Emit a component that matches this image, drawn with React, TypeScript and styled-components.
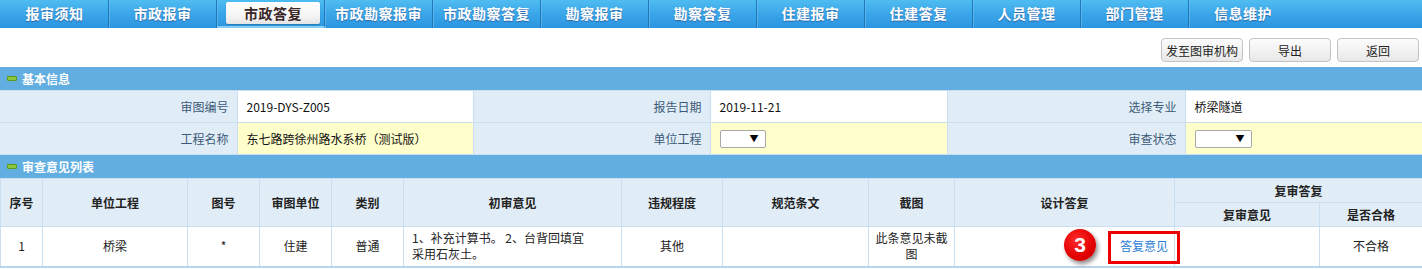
import styled, { createGlobalStyle } from 'styled-components';

const GlobalStyle = createGlobalStyle`
  html, body {
    margin: 0;
    padding: 0;
    background: #fff;
  }
  body {
    font-family: "Noto Sans CJK SC", "Microsoft YaHei", "DejaVu Sans", sans-serif;
    font-size: 12px;
    color: #333;
    width: 1422px;
  }
`;

const tabs = [
  '报审须知',
  '市政报审',
  '市政答复',
  '市政勘察报审',
  '市政勘察答复',
  '勘察报审',
  '勘察答复',
  '住建报审',
  '住建答复',
  '人员管理',
  '部门管理',
  '信息维护',
];

const NavBar = styled.div`
  display: flex;
  height: 28px;
  padding-left: 1px;
  background: linear-gradient(#4fbcf1 0%, #3aa6e8 50%, #2b95e0 100%);
  overflow: hidden;
`;

const Tab = styled.div<{ $active?: boolean }>`
  position: relative;
  flex: 0 0 108px;
  display: flex;
  align-items: flex-start;
  justify-content: center;
  padding-top: 2px;
  box-sizing: border-box;
  border-right: 1px solid #1f77b8;
  box-shadow: 1px 0 0 rgba(120, 200, 245, 0.5);
  font-size: 14px;
  font-weight: 700;
  letter-spacing: 0.5px;
  color: #fff;
  text-shadow: 0 1px 1px rgba(40, 30, 90, 0.45);

  &:last-child {
    border-right: none;
    box-shadow: none;
  }

  ${({ $active }) =>
    $active &&
    `
    border-bottom: 2px solid #86cdf4;
  `}
`;

const ActiveLabel = styled.span`
  display: flex;
  align-items: center;
  justify-content: center;
  width: 94px;
  height: 22px;
  margin-left: 5px;
  border-radius: 2px;
  background: linear-gradient(#ffffff 0%, #f6f6f6 60%, #e4e4e4 100%);
  box-shadow: 0 1px 1px rgba(0, 0, 0, 0.2);
  color: #3a2626;
  text-shadow: none;
`;

const TabText = styled.span`
  height: 22px;
  line-height: 22px;
`;

const Toolbar = styled.div`
  display: flex;
  justify-content: flex-end;
  gap: 6px;
  height: 39px;
  padding: 10px 3px 0 0;
  box-sizing: border-box;
`;

const ToolButton = styled.button`
  width: 82px;
  height: 24px;
  padding: 0;
  border: 1px solid #c4c4c4;
  border-radius: 4px;
  background: linear-gradient(#fcfcfc, #e8e8e8);
  font-family: inherit;
  font-size: 12px;
  color: #222;
  cursor: pointer;
`;

const SectionBar = styled.div`
  display: flex;
  align-items: center;
  gap: 5px;
  height: 23px;
  padding-left: 7px;
  background: #62aee0;
  color: #fff;
  font-size: 12px;
  font-weight: 700;
`;

const Minus = styled.span`
  width: 8px;
  height: 3px;
  border-radius: 1px;
  background: #8cc63f;
  border: 1px solid #5c9a1c;
`;

const InfoTable = styled.table`
  width: 1422px;
  border-collapse: collapse;
  table-layout: fixed;
`;

const InfoRow = styled.tr`
  height: 32px;
`;

const LabelCell = styled.td`
  padding: 0 8px 0 0;
  border: 1px solid #c9def0;
  border-left: none;
  background: #e1edf6;
  text-align: right;
  color: #3b5a78;
`;

const ValueCell = styled.td<{ $tone?: 'white' | 'yellow' }>`
  padding: 0 0 0 9px;
  border: 1px solid #c9def0;
  background: ${({ $tone }) => ($tone === 'yellow' ? '#ffffcc' : '#fff')};
  color: #111;
`;

const Select = styled.div<{ $w: number }>`
  display: flex;
  justify-content: flex-end;
  align-items: center;
  width: ${({ $w }) => $w}px;
  height: 18px;
  padding-right: 6px;
  box-sizing: border-box;
  border: 1px solid #a8a8a8;
  border-radius: 2px;
  background: #fff;
  font-size: 9px;
  color: #000;
`;

const GridTable = styled.table`
  width: 1422px;
  border-collapse: collapse;
  table-layout: fixed;
  border-bottom: 2px solid #b9d3ea;
`;

const HeadCell = styled.th`
  height: 23px;
  padding: 0;
  border: 1px solid #c9def0;
  background: #e1edf6;
  font-weight: 700;
  font-size: 12px;
  color: #222;
  text-align: center;
`;

const DataRow = styled.tr`
  height: 40px;
`;

const DataCell = styled.td<{ $align?: 'left' | 'center' | 'right' }>`
  position: relative;
  padding: 0 4px;
  border: 1px solid #c9def0;
  background: #fff;
  color: #222;
  line-height: 16px;
  text-align: ${({ $align }) => $align || 'center'};
`;

const OpinionText = styled.div`
  padding-left: 4px;
  text-align: left;
`;

const ReplyLink = styled.a`
  position: relative;
  z-index: 2;
  margin-right: 2px;
  color: #2b7bd6;
  text-decoration: none;
`;

const StepBadge = styled.span`
  position: absolute;
  left: 109px;
  top: 2px;
  width: 32px;
  height: 32px;
  border-radius: 50%;
  display: flex;
  align-items: center;
  justify-content: center;
  background: radial-gradient(circle at 40% 35%, #ff2a2a, #e10000 60%, #c00000);
  box-shadow: 2px 3px 4px rgba(0, 0, 0, 0.45);
  font-family: "Liberation Sans", Arial, sans-serif;
  font-size: 21px;
  font-weight: 700;
  color: #fff;
`;

const HighlightBox = styled.span`
  position: absolute;
  left: 153px;
  top: 4px;
  width: 72px;
  height: 33px;
  box-sizing: border-box;
  border: 3px solid #ee0000;
  z-index: 3;
`;

const colWidths = [42, 145, 72, 72, 72, 218, 101, 146, 86, 220, 145, 103];

export default function App() {
  return (
    <>
      <GlobalStyle />
      <NavBar>
        {tabs.map((t) => (
          <Tab key={t} $active={t === '市政答复'}>
            {t === '市政答复' ? <ActiveLabel>{t}</ActiveLabel> : <TabText>{t}</TabText>}
          </Tab>
        ))}
      </NavBar>

      <Toolbar>
        <ToolButton>发至图审机构</ToolButton>
        <ToolButton>导出</ToolButton>
        <ToolButton>返回</ToolButton>
      </Toolbar>

      <SectionBar>
        <Minus />
        基本信息
      </SectionBar>
      <InfoTable>
        <colgroup>
          <col style={{ width: 237 }} />
          <col style={{ width: 236 }} />
          <col style={{ width: 237 }} />
          <col style={{ width: 237 }} />
          <col style={{ width: 238 }} />
          <col style={{ width: 237 }} />
        </colgroup>
        <tbody>
          <InfoRow>
            <LabelCell>审图编号</LabelCell>
            <ValueCell>2019-DYS-Z005</ValueCell>
            <LabelCell>报告日期</LabelCell>
            <ValueCell>2019-11-21</ValueCell>
            <LabelCell>选择专业</LabelCell>
            <ValueCell>桥梁隧道</ValueCell>
          </InfoRow>
          <InfoRow>
            <LabelCell>工程名称</LabelCell>
            <ValueCell $tone="yellow">东七路跨徐州路水系桥（测试版）</ValueCell>
            <LabelCell>单位工程</LabelCell>
            <ValueCell $tone="yellow">
              <Select $w={46}>▼</Select>
            </ValueCell>
            <LabelCell>审查状态</LabelCell>
            <ValueCell $tone="yellow">
              <Select $w={57}>▼</Select>
            </ValueCell>
          </InfoRow>
        </tbody>
      </InfoTable>

      <SectionBar>
        <Minus />
        审查意见列表
      </SectionBar>
      <GridTable>
        <colgroup>
          {colWidths.map((w, i) => (
            <col key={i} style={{ width: w }} />
          ))}
        </colgroup>
        <thead>
          <tr>
            <HeadCell rowSpan={2}>序号</HeadCell>
            <HeadCell rowSpan={2}>单位工程</HeadCell>
            <HeadCell rowSpan={2}>图号</HeadCell>
            <HeadCell rowSpan={2}>审图单位</HeadCell>
            <HeadCell rowSpan={2}>类别</HeadCell>
            <HeadCell rowSpan={2}>初审意见</HeadCell>
            <HeadCell rowSpan={2}>违规程度</HeadCell>
            <HeadCell rowSpan={2}>规范条文</HeadCell>
            <HeadCell rowSpan={2}>截图</HeadCell>
            <HeadCell rowSpan={2}>设计答复</HeadCell>
            <HeadCell colSpan={2}>复审答复</HeadCell>
          </tr>
          <tr>
            <HeadCell>复审意见</HeadCell>
            <HeadCell>是否合格</HeadCell>
          </tr>
        </thead>
        <tbody>
          <DataRow>
            <DataCell>1</DataCell>
            <DataCell>桥梁</DataCell>
            <DataCell>*</DataCell>
            <DataCell>住建</DataCell>
            <DataCell>普通</DataCell>
            <DataCell $align="left">
              <OpinionText>
                1、补充计算书。 2、台背回填宜
                <br />
                采用石灰土。
              </OpinionText>
            </DataCell>
            <DataCell>其他</DataCell>
            <DataCell />
            <DataCell>
              此条意见未截
              <br />图
            </DataCell>
            <DataCell $align="right">
              <StepBadge>3</StepBadge>
              <ReplyLink href="#">答复意见</ReplyLink>
              <HighlightBox />
            </DataCell>
            <DataCell />
            <DataCell>不合格</DataCell>
          </DataRow>
        </tbody>
      </GridTable>
    </>
  );
}
